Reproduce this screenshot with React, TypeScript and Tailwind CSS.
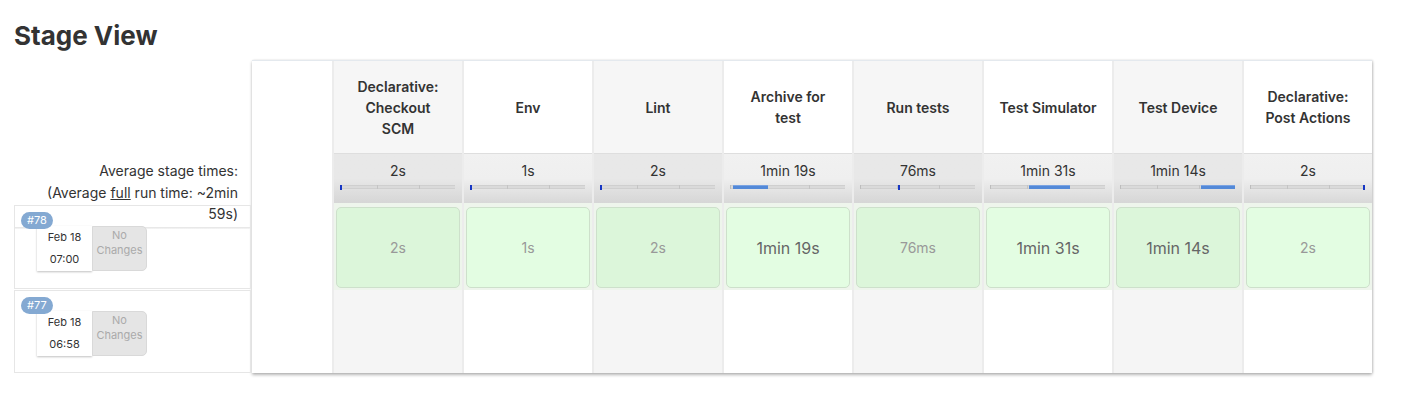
import React from 'react';

type Stage = {
  name: string[]
  avg: string
  bar: { from: number, to: number }
  run: string
  big: boolean
}

const stages: Stage[] = [
  { name: ['Declarative:', 'Checkout', 'SCM'], avg: '2s', bar: { from: 0, to: 0 }, run: '2s', big: false },
  { name: ['Env'], avg: '1s', bar: { from: 0, to: 0 }, run: '1s', big: false },
  { name: ['Lint'], avg: '2s', bar: { from: 0, to: 0 }, run: '2s', big: false },
  { name: ['Archive for', 'test'], avg: '1min 19s', bar: { from: 2.5, to: 33 }, run: '1min 19s', big: true },
  { name: ['Run tests'], avg: '76ms', bar: { from: 33, to: 33 }, run: '76ms', big: false },
  { name: ['Test Simulator'], avg: '1min 31s', bar: { from: 34, to: 70 }, run: '1min 31s', big: true },
  { name: ['Test Device'], avg: '1min 14s', bar: { from: 70, to: 100 }, run: '1min 14s', big: true },
  { name: ['Declarative:', 'Post Actions'], avg: '2s', bar: { from: 100, to: 100 }, run: '2s', big: false },
]

const runs = [
  { id: '#78', date: 'Feb 18', time: '07:00', latest: true },
  { id: '#77', date: 'Feb 18', time: '06:58', latest: false },
]

const ProgressBar = ({ from, to }: { from: number, to: number }) => {
  const tick = to - from < 1
  return (
    <div className="relative mx-[6px] h-[4px] w-[115px] bg-[#dadada] border-y border-[#cfcfcf]">
      <div className="absolute top-[-1px] left-[37px] h-[4px] w-px bg-[#c4c4c4]" />
      <div className="absolute top-[-1px] left-[79px] h-[4px] w-px bg-[#c4c4c4]" />
      <div className="absolute top-[-1px] left-0 h-[4px] w-px bg-[#bdbdbd]" />
      {tick
        ? (<div className="absolute top-[-1px] h-[5px] w-[2px] bg-[#1737c4]" style={{ left: `calc(${from}% - ${from >= 100 ? 2 : 0}px)` }} />)
        : (<div className="absolute top-[-1px] h-[4px] bg-[#5389d8] border-t border-[#7aa3e2]" style={{ left: `${from}%`, width: `${to - from}%` }} />)
      }
    </div>
  )
}

const App = () => {
  return (
    <div className="min-h-screen bg-white text-[#333] font-['Inter','Liberation_Sans',sans-serif]">
      <div className="h-[60px] pl-[14px] pt-[20px]">
        <h1 className="text-[26px] leading-[32px] font-bold">Stage View</h1>
      </div>
      <div className="flex">
        {/* run list */}
        <div className="w-[238px] ml-[14px]">
          <div className="h-[100px]" />
          <div className="relative z-10 h-[45px] pr-[14px] text-right text-[14px] leading-[21.5px]">
            Average stage times:<br />
            (Average <span className="underline">full</span> run time: ~2min<br />
            59s)
          </div>
          { runs.map((run, i) => (
            <div key={ run.id } className={`relative w-[237px] border border-[#e6e6e6] ${i === 0 ? 'h-[84px]' : 'h-[83px] mt-[1px]'}`}>
              {run.latest && (<div className="absolute left-0 right-0 top-[21px] h-[2px] bg-gradient-to-b from-[#e3e3e3] to-[#f6f6f6]" />)}
              <div className="relative flex pt-[20px] pl-[22px]">
                <div className="w-[55px] h-[45px] bg-white shadow-[0_1px_2px_rgba(0,0,0,0.25)] flex flex-col items-center text-[11px] leading-[22px] text-[#333]">
                  <span>{ run.date }</span>
                  <span>{ run.time }</span>
                </div>
                <div className="w-[55px] h-[45px] bg-[#e5e5e5] border border-[#d9d9d9] rounded-r-[5px] flex flex-col items-center pt-[1px] text-[11px] leading-[15px] text-[#aaa]">
                  <span>No</span>
                  <span>Changes</span>
                </div>
              </div>
              <div className="absolute top-[6px] left-[6px] h-[17px] px-[6px] rounded-full bg-[#84a9d2] text-white text-[11px] leading-[17px]">
                { run.id }
              </div>
            </div>
          )) }
        </div>

        {/* stage table */}
        <div className="flex border-t border-[#e4e9ee] bg-white shadow-[0_2px_3px_rgba(0,0,0,0.28),1px_0_2px_rgba(0,0,0,0.12)]">
          <div className="w-[80px] flex flex-col">
            <div className="h-[92px]" />
            <div className="h-[50px]" />
            <div className="h-[87px]" />
            <div className="h-[83px]" />
          </div>
          { stages.map((stage, i) => {
            const odd = i % 2 === 0
            return (
              <div key={ i } className="w-[130px] flex flex-col border-l-2 border-[#ececec]">
                <div className={`h-[92px] flex flex-col justify-center items-center text-center text-[14px] leading-[21px] font-semibold text-[#333] ${odd ? 'bg-[#f6f6f6]' : 'bg-white'}`}>
                  { stage.name.map((line) => (<span key={ line }>{ line }</span>)) }
                </div>
                <div className={`h-[50px] pt-[7px] border-t border-[#dedede] ${odd ? 'bg-gradient-to-b from-[#e8e8e8] via-[#e8e8e8] to-[#d6d6d6]' : 'bg-gradient-to-b from-[#f1f1f1] via-[#efefef] to-[#d8d8d8]'}`}>
                  <p className="text-center text-[14px] leading-[20px] text-[#333]">{ stage.avg }</p>
                  <div className="mt-[4px]">
                    <ProgressBar from={ stage.bar.from } to={ stage.bar.to } />
                  </div>
                </div>
                <div className="h-[87px] bg-[#eef5ec] px-[2px] pt-[4px] pb-[2px]">
                  <div className={`h-[81px] rounded-[5px] border border-[#cde0cb] flex justify-center items-center ${odd ? 'bg-[#dcf6da]' : 'bg-[#e3fde2]'} ${stage.big ? 'text-[16px] text-[#666]' : 'text-[14px] text-[#999]'}`}>
                    { stage.run }
                  </div>
                </div>
                <div className={`h-[83px] ${odd ? 'bg-[#f5f5f5]' : 'bg-white'}`} />
              </div>
            )
          }) }
        </div>
      </div>
    </div>
  )
}

export default App
